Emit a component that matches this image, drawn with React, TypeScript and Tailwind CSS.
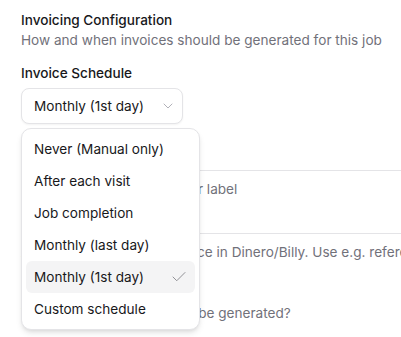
import React from "react";
import { Check, ChevronDown } from "lucide-react";

const options = [
  "Never (Manual only)",
  "After each visit",
  "Job completion",
  "Monthly (last day)",
  "Monthly (1st day)",
  "Custom schedule",
];

export default function App() {
  const selected = "Monthly (1st day)";

  return (
    <div
      className="w-[401px] h-[337px] overflow-hidden bg-white text-[#18181b]"
      style={{ fontFamily: "Inter, 'Noto Sans', sans-serif" }}
    >
      <div className="w-[620px] pl-[21px] pt-[10px]">
        {/* Heading */}
        <div className="text-[13.6px] leading-5 font-medium">Invoicing Configuration</div>
        <div className="text-[13.6px] leading-5 text-[#71717a]">
          How and when invoices should be generated for this job
        </div>

        {/* Schedule select */}
        <div className="mt-[13px] text-[13.6px] leading-5 font-medium">Invoice Schedule</div>
        <div className="relative mt-[5px]">
          <button className="flex h-9 items-center gap-[16px] rounded-lg border border-[#e4e4e7] bg-white pl-3 pr-[6px] text-[13.6px] shadow-xs">
            <span>{selected}</span>
            <ChevronDown size={16} strokeWidth={1.25} className="text-[#a1a1aa]" />
          </button>

          {/* Open menu */}
          <div className="absolute left-0 top-[40px] z-10 w-[179px] rounded-[10px] border border-[#e4e4e7] bg-white p-1 shadow-md">
            {options.map((opt) => (
              <div
                key={opt}
                className={`flex h-8 items-center justify-between rounded-md pl-2 pr-[7px] text-[13.6px] ${
                  opt === selected ? "bg-[#f4f4f5]" : ""
                }`}
              >
                <span>{opt}</span>
                {opt === selected && (
                  <Check size={18} strokeWidth={1.25} className="text-[#8a8a8f]" />
                )}
              </div>
            ))}
          </div>
        </div>

        {/* Invoice title */}
        <div className="mt-[16px] text-[13.6px] leading-5 font-medium">Invoice Title</div>
        <textarea
          readOnly
          placeholder="Optional invoice header or label"
          className="mt-[10px] block h-[64px] w-full resize-none rounded-lg border border-[#e4e4e7] px-3 py-2 text-[13.6px] leading-5 placeholder:text-[#71717a]"
        />
        <div className="mt-[8px] text-[13.6px] leading-5 text-[#71717a] whitespace-nowrap">
          A label shown on your invoice in Dinero/Billy. Use e.g. reference numbers
        </div>

        {/* Timing */}
        <div className="mt-[21px] text-[13.6px] leading-5 font-medium">Invoice Timing</div>
        <div className="text-[13.6px] leading-5 text-[#71717a]">
          When should your invoices be generated?
        </div>
      </div>
    </div>
  );
}
